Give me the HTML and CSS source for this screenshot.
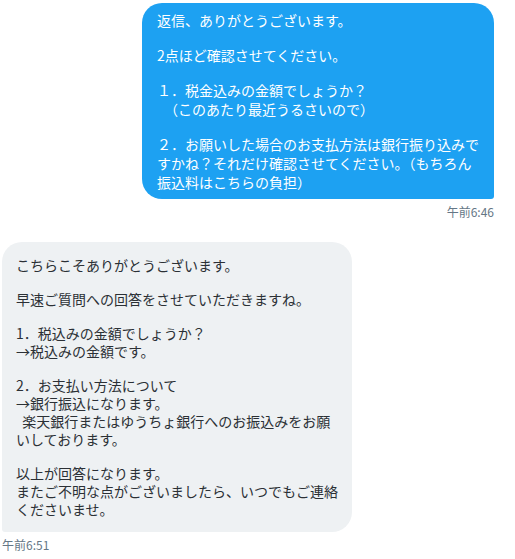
FILE: index.html
```html
<!DOCTYPE html>
<html lang="ja">
<head>
  <meta charset="utf-8" />
  <title>メッセージ</title>
  <meta name="viewport" content="width=device-width, initial-scale=1" />
  <link rel="stylesheet" href="styles.css">
</head>
<body>
  <main class="thread">

    <!-- 送信メッセージ -->
    <div class="msg msg-sent">
      <div class="bubble bubble-sent">
        <p>返信、ありがとうございます。</p>
        <p>2点ほど確認させてください。</p>
        <p>１．税金込みの金額でしょうか？<br>　（このあたり最近うるさいので）</p>
        <p>２．お願いした場合のお支払方法は銀行振り込みで<br>すかね？それだけ確認させてください。（もちろん<br>振込料はこちらの負担）</p>
      </div>
      <span class="time">午前6:46</span>
    </div>

    <!-- 受信メッセージ -->
    <div class="msg msg-recv">
      <div class="bubble bubble-recv">
        <p>こちらこそありがとうございます。</p>
        <p>早速ご質問への回答をさせていただきますね。</p>
        <p>1．税込みの金額でしょうか？<br>→税込みの金額です。</p>
        <p>2．お支払い方法について<br>→銀行振込になります。<br>&nbsp;&nbsp;楽天銀行またはゆうちょ銀行へのお振込みをお願<br>いしております。</p>
        <p>以上が回答になります。<br>またご不明な点がございましたら、いつでもご連絡<br>くださいませ。</p>
      </div>
      <span class="time">午前6:51</span>
    </div>

  </main>
</body>
</html>
```

FILE: styles.css
```css
:root{
  --blue:#1da1f2;
  --gray-bg:#eef1f3;
  --text:#2b3035;
  --muted:#657786;
}

*{box-sizing:border-box;margin:0;padding:0}
body{
  font-family:'Noto Sans CJK JP','Noto Sans',sans-serif;
  background:#fff;color:var(--text);
  font-size:14px;
}

.thread{display:flex;flex-direction:column}

/* —— メッセージ —— */
.msg{display:flex;flex-direction:column}
.msg-sent{align-items:flex-end;padding:3px 21px 0 0}
.msg-recv{align-items:flex-start;padding:22px 0 0 2px}

.bubble{width:352px}
.bubble p{white-space:nowrap}
.bubble p + p{margin-top:16px}

.bubble-sent{
  background:var(--blue);color:#fff;
  padding:8px 15px 7px;line-height:19px;
  border-radius:20px 20px 3px 20px;
}
.bubble-recv{
  width:350px;
  background:var(--gray-bg);color:var(--text);
  padding:14px 14px;line-height:18px;
  border-radius:20px 20px 20px 3px;
}

.time{font-size:12px;line-height:16px;color:var(--muted);margin-top:5px}
```
